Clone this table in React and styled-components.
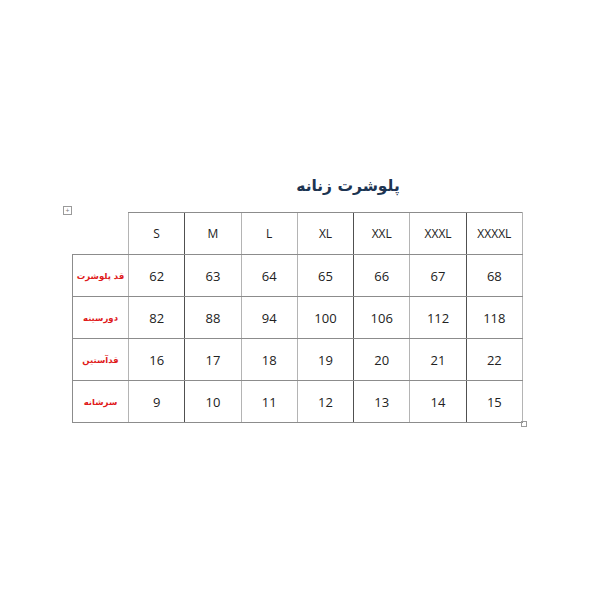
import React from "react";
import styled, { createGlobalStyle } from "styled-components";

const GlobalStyle = createGlobalStyle`
  html, body { margin: 0; padding: 0; background: #fff; }
  body { font-family: "Open Sans", "Liberation Sans", sans-serif; }
`;

const LIGHT = "#b4b4b4";
const MID = "#8c8c8c";
const DARK = "#505050";

const Page = styled.div`
  width: 600px;
  height: 600px;
  padding-top: 172px;
  box-sizing: border-box;
`;

const Title = styled.div`
  width: 600px;
  padding-left: 96px;
  box-sizing: border-box;
  text-align: center;
  direction: rtl;
  font-family: "DejaVu Sans", "Noto Sans", sans-serif;
  font-weight: bold;
  font-size: 15.5px;
  line-height: 28px;
  color: #1d3452;
`;

const Wrap = styled.div`
  position: relative;
  margin-left: 72px;
  margin-top: 12px;
  width: 451px;
`;

const MoveHandle = styled.div`
  position: absolute;
  left: -9px;
  top: -6px;
  width: 7px;
  height: 7px;
  border: 1px solid #9a9a9a;
  font-size: 7px;
  line-height: 7px;
  text-align: center;
  color: #777;
`;

const ResizeHandle = styled.div`
  position: absolute;
  right: -4px;
  bottom: -4px;
  width: 4px;
  height: 4px;
  border: 1px solid #9a9a9a;
`;

const Table = styled.table`
  border-collapse: collapse;
  table-layout: fixed;
  width: 451px;
`;

const Cell = styled.td`
  height: 41px;
  padding: 0;
  text-align: center;
  vertical-align: middle;
  border-top: 1px solid ${MID};
  border-bottom: 1px solid ${MID};
  border-left: 1px solid ${p => (p.$darkLeft ? DARK : LIGHT)};
  border-right: ${p => (p.$last ? `1px solid ${LIGHT}` : "none")};
  font-family: "Open Sans", "Liberation Sans", sans-serif;
  font-size: ${p => (p.$head ? "12px" : "13px")};
  color: #222;
`;

const Corner = styled.td`
  height: 41px;
  padding: 0;
  border: none;
  border-bottom: 1px solid ${MID};
`;

const Label = styled.td`
  height: 41px;
  padding: 0;
  text-align: center;
  vertical-align: middle;
  direction: rtl;
  border-top: 1px solid ${MID};
  border-bottom: 1px solid ${MID};
  border-left: 1px solid ${MID};
  border-right: none;
  font-family: "DejaVu Sans", "Noto Sans", sans-serif;
  font-weight: bold;
  font-size: 8.5px;
  color: #e01b1b;
`;

const sizes = ["S", "M", "L", "XL", "XXL", "XXXL", "XXXXL"];
const darkLines = [1, 4, 6];
const rows = [
  { label: "قد پلوشرت", values: [62, 63, 64, 65, 66, 67, 68] },
  { label: "دورسینه", values: [82, 88, 94, 100, 106, 112, 118] },
  { label: "قدآستین", values: [16, 17, 18, 19, 20, 21, 22] },
  { label: "سرشانه", values: [9, 10, 11, 12, 13, 14, 15] },
];

export default function App() {
  return (
    <Page>
      <GlobalStyle />
      <Title>پلوشرت زنانه</Title>
      <Wrap>
        <MoveHandle>+</MoveHandle>
        <Table>
          <colgroup>
            <col style={{ width: 56 }} />
            {sizes.map(s => <col key={s} />)}
          </colgroup>
          <tbody>
            <tr>
              <Corner />
              {sizes.map((s, i) => (
                <Cell key={s} $head $darkLeft={darkLines.includes(i)} $last={i === 6}>{s}</Cell>
              ))}
            </tr>
            {rows.map(r => (
              <tr key={r.label}>
                <Label>{r.label}</Label>
                {r.values.map((v, i) => (
                  <Cell key={i} $darkLeft={darkLines.includes(i)} $last={i === 6}>{v}</Cell>
                ))}
              </tr>
            ))}
          </tbody>
        </Table>
        <ResizeHandle />
      </Wrap>
    </Page>
  );
}
